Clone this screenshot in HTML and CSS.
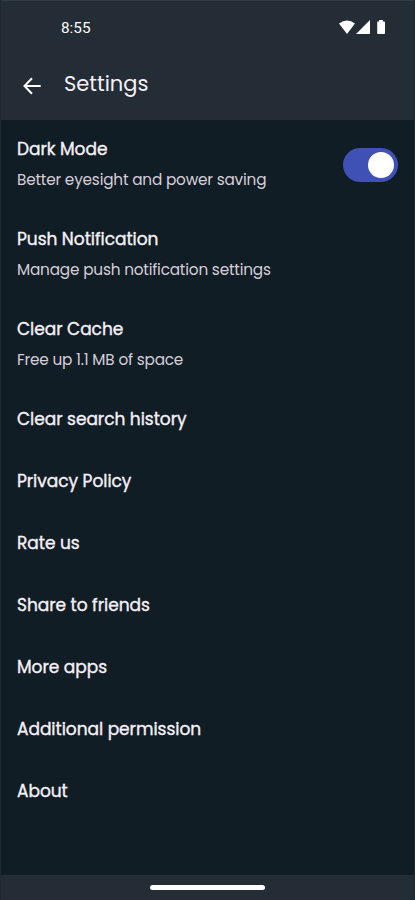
FILE: index.html
```html
<!DOCTYPE html>
<html lang="en">
<head>
<meta charset="utf-8">
<title>Settings</title>
<link rel="stylesheet" href="styles.css">
</head>
<body>
<div class="screen">
  <header class="header">
    <div class="status">
      <span class="clock">8:55</span>
      <svg class="status-icons" width="48" height="15" viewBox="0 0 48 15" fill="#fff"><path d="M0 3.6Q8-2.6 16 3.6L8 14Z"/><path d="M31 0V14H17Z"/><path d="M38.2 2Q38.2 1.4 38.8 1.4H40V0H44V1.4H45.2Q46 1.4 46 2.2V13.2Q46 14 45.2 14H39Q38.2 14 38.2 13.2Z"/></svg>
    </div>
    <div class="appbar">
      <svg class="back" width="18" height="18" viewBox="0 0 18 18" fill="none" stroke="#fff" stroke-width="2"><path d="M17.7 9H2M9 1.3L1.5 9L9 16.7"/></svg>
      <h1 class="heading">Settings</h1>
    </div>
  </header>
  <main class="list">
    <div class="row double">
      <div><div class="title">Dark Mode</div><div class="desc">Better eyesight and power saving</div></div>
      <div class="toggle"><div class="knob"></div></div>
    </div>
    <div class="row double"><div><div class="title">Push Notification</div><div class="desc">Manage push notification settings</div></div></div>
    <div class="row double"><div><div class="title">Clear Cache</div><div class="desc">Free up 1.1 MB of space</div></div></div>
    <div class="row"><div class="title">Clear search history</div></div>
    <div class="row"><div class="title">Privacy Policy</div></div>
    <div class="row"><div class="title">Rate us</div></div>
    <div class="row"><div class="title">Share to friends</div></div>
    <div class="row"><div class="title">More apps</div></div>
    <div class="row"><div class="title">Additional permission</div></div>
    <div class="row"><div class="title">About</div></div>
  </main>
  <footer class="navbar"><div class="handle"></div></footer>
</div>
</body>
</html>
```
FILE: styles.css
```css
* { box-sizing: border-box; }
body { margin: 0; background: #111d24; color: #f6f1f7; font-family: Poppins, Inter, sans-serif; }
.screen { height: 900px; display: flex; flex-direction: column; overflow: hidden; border: solid #1e2a31; border-width: 0 1px; }
.header { height: 120px; background: #242d35; border-top: 1px solid #303b43; }
.status { height: 54px; padding: 0 27px 0 60px; display: flex; align-items: center; justify-content: space-between; }
.status-icons { margin-top: -1px; }
.clock { font: 15.3px/20px Roboto, sans-serif; color: #fff; }
.appbar { padding: 11px 0 0 22px; display: flex; align-items: center; gap: 23px; }
.back { margin-top: 3px; }
.heading { margin: 0; font-size: 21px; line-height: 36px; font-weight: 400; }
.list { flex: 1; }
.row { height: 62px; padding: 16px 16px 0; display: flex; justify-content: space-between; }
.double { height: 90px; }
.title { font-size: 17px; letter-spacing: -0.03px; line-height: 26px; -webkit-text-stroke: 0.35px #f6f1f7; white-space: nowrap; }
.desc { margin-top: 5px; font-size: 15.3px; letter-spacing: -0.2px; line-height: 26px; color: #d5ced9; white-space: nowrap; }
.toggle { width: 55px; height: 34px; margin-top: 12px; border-radius: 17px; background: #4051b5; padding: 4px; display: flex; justify-content: flex-end; }
.knob { width: 26px; height: 26px; border-radius: 50%; background: #fff; }
.navbar { height: 25px; background: #242d35; display: flex; justify-content: center; align-items: center; }
.handle { width: 115px; height: 5px; border-radius: 3px; background: #fff; }
```
